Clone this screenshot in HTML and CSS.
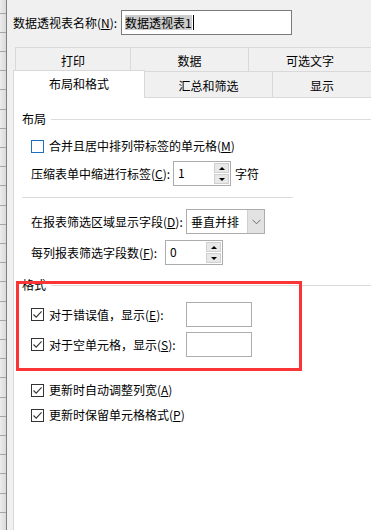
FILE: index.html
```html
<!DOCTYPE html>
<html lang="zh-CN">
<head>
    <meta charset="UTF-8">
    <title>数据透视表选项</title>
    <link rel="stylesheet" href="styles.css">
</head>
<body>
<div class="screen">
    <div class="sheet-edge"></div>

    <div class="dialog">
        <div class="name-row">
            <label class="name-label">数据透视表名称(<u>N</u>):</label>
            <div class="name-input"><span class="sel">数据透视表1</span><span class="caret"></span></div>
        </div>

        <div class="tabs">
            <div class="tab-row back">
                <div class="tab t-print">打印</div>
                <div class="tab t-data">数据</div>
                <div class="tab t-alt">可选文字</div>
            </div>
            <div class="tab-row front">
                <div class="tab active">布局和格式</div>
                <div class="tab t-total">汇总和筛选</div>
                <div class="tab t-show">显示</div>
            </div>
        </div>

        <div class="panel">
            <!-- 布局 -->
            <div class="group-title first">布局<span class="rule"></span></div>

            <div class="row cb-row r-merge">
                <span class="checkbox focus"></span>
                <span>合并且居中排列带标签的单元格(<u>M</u>)</span>
            </div>

            <div class="row r-indent">
                <span class="lbl lbl-c">压缩表单中缩进行标签(<u>C</u>):</span>
                <div class="spin">
                    <span class="spin-val">1</span>
                    <span class="spin-btns">
                        <span class="spin-btn"><i class="arrow up"></i></span>
                        <span class="spin-btn"><i class="arrow down"></i></span>
                    </span>
                </div>
                <span class="unit">字符</span>
            </div>

            <div class="separator"></div>

            <div class="row r-area">
                <span class="lbl lbl-d">在报表筛选区域显示字段(<u>D</u>):</span>
                <div class="combo">
                    <span class="combo-val">垂直并排</span>
                    <span class="combo-btn">
                        <svg width="9" height="6" viewBox="0 0 9 6"><path d="M0.5 0.8 L4.5 4.8 L8.5 0.8" fill="none" stroke="#6d6d6d" stroke-width="1"/></svg>
                    </span>
                </div>
            </div>

            <div class="row r-count">
                <span class="lbl lbl-f">每列报表筛选字段数(<u>F</u>):</span>
                <div class="spin">
                    <span class="spin-val">0</span>
                    <span class="spin-btns">
                        <span class="spin-btn"><i class="arrow up"></i></span>
                        <span class="spin-btn"><i class="arrow down"></i></span>
                    </span>
                </div>
            </div>

            <!-- 格式 -->
            <div class="group-title second">格式<span class="rule"></span></div>

            <div class="row r-error">
                <span class="lbl lbl-e">
                    <span class="checkbox checked"><svg width="11" height="11" viewBox="0 0 11 11"><path d="M1.5 5.5 L4.2 8.2 L9.6 2.4" fill="none" stroke="#333" stroke-width="1.1"/></svg></span>
                    <span>对于错误值，显示(<u>E</u>):</span>
                </span>
                <span class="textbox"></span>
            </div>

            <div class="row r-empty">
                <span class="lbl lbl-e">
                    <span class="checkbox checked"><svg width="11" height="11" viewBox="0 0 11 11"><path d="M1.5 5.5 L4.2 8.2 L9.6 2.4" fill="none" stroke="#333" stroke-width="1.1"/></svg></span>
                    <span>对于空单元格，显示(<u>S</u>):</span>
                </span>
                <span class="textbox"></span>
            </div>

            <div class="row cb-row r-autofit">
                <span class="checkbox checked"><svg width="11" height="11" viewBox="0 0 11 11"><path d="M1.5 5.5 L4.2 8.2 L9.6 2.4" fill="none" stroke="#333" stroke-width="1.1"/></svg></span>
                <span>更新时自动调整列宽(<u>A</u>)</span>
            </div>

            <div class="row cb-row r-keep">
                <span class="checkbox checked"><svg width="11" height="11" viewBox="0 0 11 11"><path d="M1.5 5.5 L4.2 8.2 L9.6 2.4" fill="none" stroke="#333" stroke-width="1.1"/></svg></span>
                <span>更新时保留单元格格式(<u>P</u>)</span>
            </div>

            <!-- annotation frame -->
            <div class="highlight-box"></div>
        </div>
    </div>
</div>
</body>
</html>
```

FILE: styles.css
```css
html, body {
    margin: 0;
    padding: 0;
    height: 100%;
}
body {
    font-family: "Noto Sans CJK SC", "Noto Sans", sans-serif;
    font-size: 12px;
    line-height: 16px;
    color: #000;
    background-color: #f0f0f0;
    overflow: hidden;
}
u {
    text-decoration: underline;
    text-underline-offset: 1px;
}
.screen {
    display: flex;
    height: 530px;
}

/* spreadsheet row headers peeking out on the left */
.sheet-edge {
    flex: 0 0 6px;
    border-right: 1px solid #7f7f7f;
    background:
        repeating-linear-gradient(180deg, transparent 0 12.6px, #a6a6a6 12.6px 13.6px, transparent 13.6px 19.2px),
        linear-gradient(90deg, #ececec, #dadada);
}

.dialog {
    flex: 1;
    min-width: 0;
    display: flex;
    flex-direction: column;
}

.name-row {
    display: flex;
    align-items: center;
    height: 25px;
    margin: 10px 0 0 6px;
}
.name-label {
    width: 108px;
}
.name-input {
    box-sizing: border-box;
    width: 171px;
    height: 25px;
    border: 1px solid #7a7a7a;
    background-color: #fff;
    display: flex;
    align-items: center;
    padding-left: 3px;
}
.sel {
    background-color: #cccccc;
    line-height: 15px;
}
.caret {
    width: 1px;
    height: 15px;
    background-color: #000;
    margin-left: 1px;
}

/* tabs */
.tabs {
    margin-top: 12px;
}
.tab-row {
    display: flex;
}
.tab {
    box-sizing: border-box;
    background-color: #f0f0f0;
    border-top: 1px solid #d9d9d9;
    border-left: 1px solid #d9d9d9;
    text-align: center;
    padding-top: 5px;
}
.back {
    height: 24px;
    padding-left: 8px;
}
.t-print { width: 115px; }
.t-data { width: 118px; }
.t-alt { flex: 1; }

.front {
    height: 26px;
    padding-left: 6px;
}
.front .tab {
    padding-top: 6px;
}
.front .active {
    position: relative;
    z-index: 1;
    width: 132px;
    height: 28px;
    margin-top: -1px;
    background-color: #fff;
    border-right: 1px solid #d9d9d9;
    padding-top: 5px;
}
.t-total {
    width: 127px;
    border-left: none !important;
}
.t-show { flex: 1; }

/* tab page */
.panel {
    position: relative;
    flex: 1;
    margin-left: 6px;
    background-color: #fff;
    border-top: 1px solid #d9d9d9;
    border-left: 1px solid #d9d9d9;
    padding-left: 8px;
}
.group-title {
    display: flex;
    align-items: center;
    height: 16px;
}
.group-title .rule {
    flex: 1;
    height: 1px;
    margin-left: 5px;
    background-color: #dcdcdc;
}
.group-title.first { margin-top: 13px; }
.group-title.second { margin-top: 12px; }

.row {
    display: flex;
    align-items: center;
    margin-left: 9px;
}
.cb-row {
    height: 16px;
}
.checkbox {
    box-sizing: border-box;
    flex: 0 0 13px;
    width: 13px;
    height: 13px;
    border: 1px solid #333;
    background-color: #fff;
    margin-right: 5px;
    display: flex;
    align-items: center;
    justify-content: center;
}
.checkbox.focus {
    border-color: #1f6fbf;
}

.r-merge { margin-top: 11px; }
.r-indent { margin-top: 7px; height: 25px; }
.separator {
    width: 271px;
    height: 1px;
    margin-top: 11px;
    background-color: #dcdcdc;
}
.r-area { margin-top: 11px; height: 25px; }
.r-count { margin-top: 6px; height: 25px; }
.r-error { margin-top: 9px; height: 25px; }
.r-empty { margin-top: 5px; height: 25px; }
.r-autofit { margin-top: 25px; }
.r-keep { margin-top: 9px; }

.lbl-c { width: 142px; }
.lbl-d { width: 155px; }
.lbl-f { width: 134px; }
.lbl-e {
    width: 155px;
    display: flex;
    align-items: center;
}

.spin {
    box-sizing: border-box;
    width: 58px;
    height: 25px;
    border: 1px solid #acacac;
    background-color: #fff;
    display: flex;
    padding: 1px;
}
.spin-val {
    flex: 1;
    padding-left: 3px;
    line-height: 20px;
}
.spin-btns {
    width: 15px;
    display: flex;
    flex-direction: column;
    gap: 1px;
}
.spin-btn {
    flex: 1;
    box-sizing: border-box;
    background-color: #e8e8e8;
    border: 1px solid #d0d0d0;
    display: flex;
    align-items: center;
    justify-content: center;
}
.arrow {
    width: 0;
    height: 0;
    border-left: 3px solid transparent;
    border-right: 3px solid transparent;
}
.arrow.up { border-bottom: 3px solid #000; }
.arrow.down { border-top: 3px solid #000; }
.unit {
    margin-left: 4px;
}

.combo {
    box-sizing: border-box;
    width: 79px;
    height: 25px;
    border: 1px solid #acacac;
    background-color: #fff;
    display: flex;
}
.combo-val {
    flex: 1;
    padding-left: 4px;
    line-height: 23px;
}
.combo-btn {
    width: 16px;
    background-color: #e2e2e2;
    border-left: 1px solid #cfcfcf;
    display: flex;
    align-items: center;
    justify-content: center;
}

.textbox {
    box-sizing: border-box;
    width: 66px;
    height: 25px;
    border: 1px solid #adadad;
    background-color: #fff;
}

/* red annotation rectangle drawn over the 格式 group */
.highlight-box {
    position: absolute;
    left: 2px;
    top: 183px;
    width: 286px;
    height: 90px;
    box-sizing: border-box;
    border: 3px solid #fb3535;
    z-index: 2;
}
```
